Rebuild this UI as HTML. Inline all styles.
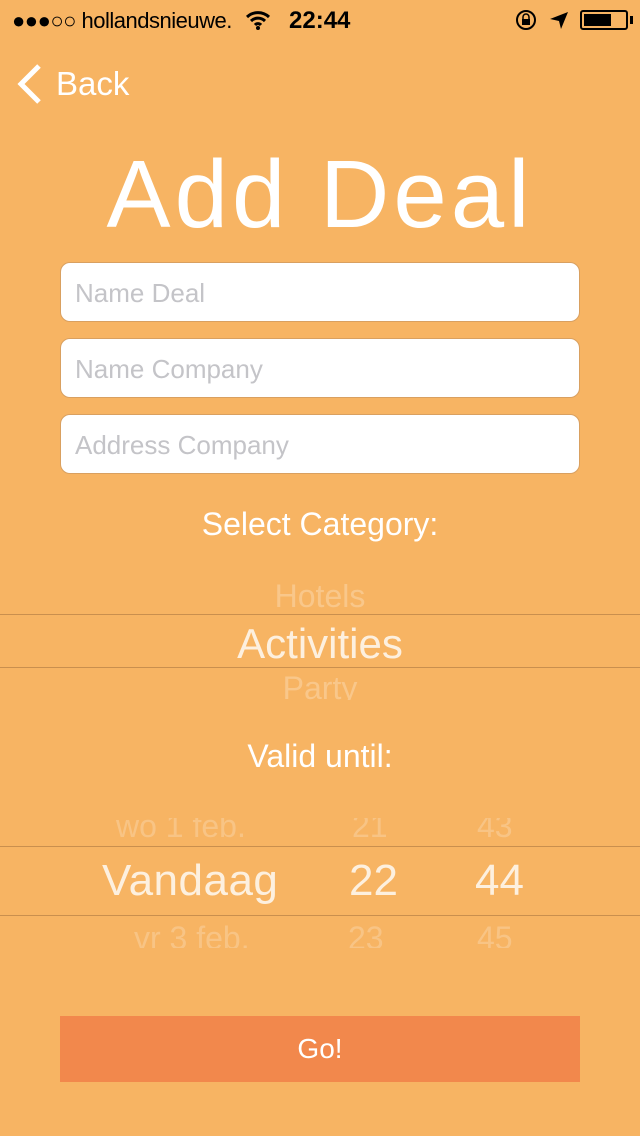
<!DOCTYPE html>
<html><head><meta charset="utf-8"><style>
*{margin:0;padding:0;box-sizing:border-box}
body{width:640px;height:1136px;background:#F7B463;font-family:"Liberation Sans",sans-serif;position:relative;overflow:hidden;color:#fff}
.a{position:absolute}
.inp{position:absolute;left:60px;width:520px;height:60px;background:#fff;border:1px solid #d9a060;border-radius:10px;font-size:26px;color:#c4c4c8;padding:15px 14px}
.line{position:absolute;left:0;width:640px;height:1px;background:#c98f4e}
.c{text-align:center;width:640px;left:0}
.clip{position:absolute;overflow:hidden;left:0;width:640px}
</style></head><body>
<div class="a" style="left:12px;top:8px;font-size:22px;color:#000;letter-spacing:-0.5px">●●●○○ hollandsnieuwe.</div>
<svg class="a" style="left:245px;top:10px" width="26" height="20" viewBox="0 0 26 20"><path d="M2 7a16 16 0 0 1 22 0M6 11a10 10 0 0 1 14 0M10 15a4 4 0 0 1 6 0" stroke="#000" stroke-width="3" fill="none"/><circle cx="13" cy="18" r="2" fill="#000"/></svg>
<div class="a" style="left:289px;top:7px;font-size:24px;font-weight:bold;color:#000">22:44</div>
<svg class="a" style="left:515px;top:9px" width="24" height="22"><circle cx="11" cy="11" r="9" stroke="#000" stroke-width="2" fill="none"/><rect x="7" y="10" width="8" height="6" fill="#000"/><path d="M8 10V8a3 3 0 0 1 6 0v2" stroke="#000" stroke-width="1.5" fill="none"/></svg>
<svg class="a" style="left:548px;top:10px" width="22" height="20"><path d="M2 9L20 2L13 19L11 11Z" fill="#000"/></svg>
<div class="a" style="left:580px;top:10px;width:48px;height:20px;border:2px solid #000;border-radius:3px"><div style="margin:2px;width:27px;height:12px;background:#000"></div></div>
<div class="a" style="left:630px;top:16px;width:3px;height:8px;background:#000"></div>
<svg class="a" style="left:15px;top:62px" width="28" height="44"><path d="M24 4L6 22L24 40" stroke="#fff" stroke-width="5" fill="none"/></svg>
<div class="a" style="left:56px;top:65px;font-size:33px">Back</div>
<div class="a c" style="top:140px;font-size:96px;letter-spacing:4px">Add Deal</div>
<div class="inp" style="top:262px">Name Deal</div>
<div class="inp" style="top:338px">Name Company</div>
<div class="inp" style="top:414px">Address Company</div>
<div class="a c" style="top:506px;font-size:32px">Select Category:</div>
<div class="clip" style="top:584px;height:116px">
<div class="a c" style="top:-6px;font-size:32px;color:rgba(255,255,255,.25)">Hotels</div>
<div class="a c" style="top:36px;font-size:42px;color:#fdf0df">Activities</div>
<div class="a c" style="top:86px;font-size:32px;color:rgba(255,255,255,.25)">Party</div>
</div>
<div class="line" style="top:614px"></div><div class="line" style="top:667px"></div>
<div class="a c" style="top:738px;font-size:32px">Valid until:</div>
<div class="clip" style="top:818px;height:130px">
<div class="a" style="left:116px;top:-10px;font-size:32px;color:rgba(255,255,255,.22)">wo 1 feb.</div>
<div class="a" style="left:352px;top:-10px;font-size:32px;color:rgba(255,255,255,.22)">21</div>
<div class="a" style="left:477px;top:-10px;font-size:32px;color:rgba(255,255,255,.22)">43</div>
<div class="a" style="left:102px;top:38px;font-size:44px;color:#fdf0df;letter-spacing:0.5px">Vandaag</div>
<div class="a" style="left:349px;top:38px;font-size:44px;color:#fdf0df">22</div>
<div class="a" style="left:475px;top:38px;font-size:44px;color:#fdf0df">44</div>
<div class="a" style="left:134px;top:102px;font-size:32px;color:rgba(255,255,255,.22)">vr 3 feb.</div>
<div class="a" style="left:348px;top:102px;font-size:32px;color:rgba(255,255,255,.22)">23</div>
<div class="a" style="left:477px;top:102px;font-size:32px;color:rgba(255,255,255,.22)">45</div>
</div>
<div class="line" style="top:846px"></div><div class="line" style="top:915px"></div>
<div class="a" style="left:60px;top:1016px;width:520px;height:66px;background:#F2884C;font-size:28px;text-align:center;line-height:66px">Go!</div>
</body></html>
